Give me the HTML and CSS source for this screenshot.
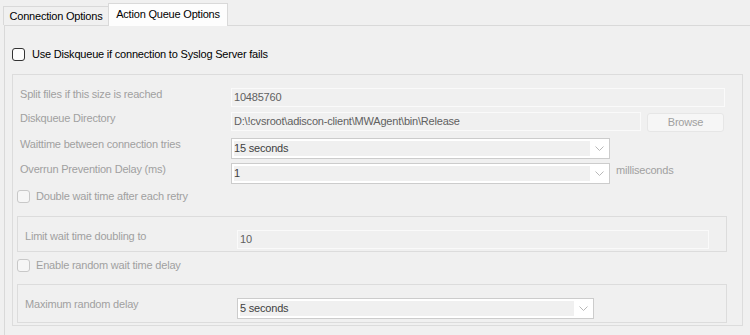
FILE: index.html
```html
<!DOCTYPE html>
<html>
<head>
<meta charset="utf-8">
<link rel="stylesheet" href="styles.css">
</head>
<body>
<div class="tabs">
  <div class="tab">Connection Options</div>
  <div class="tab active">Action Queue Options</div>
</div>
<div class="page">
  <div class="check enabled top"><span class="box"></span><span>Use Diskqueue if connection to Syslog Server fails</span></div>
  <div class="group">
    <div class="row r1">
      <span class="lbl">Split files if this size is reached</span>
      <div class="tb w-size">10485760</div>
    </div>
    <div class="row r2">
      <span class="lbl">Diskqueue Directory</span>
      <div class="tb w-dir">D:\!cvsroot\adiscon-client\MWAgent\bin\Release</div>
      <div class="btn">Browse</div>
    </div>
    <div class="row r3">
      <span class="lbl">Waittime between connection tries</span>
      <div class="combo w-combo"><div class="field">15 seconds</div><div class="arrow"><svg width="9" height="5" viewBox="0 0 9 5"><path d="M0.5 0.5 L4.5 4.5 L8.5 0.5" fill="none" stroke="#b8b8b8" stroke-width="1"/></svg></div></div>
    </div>
    <div class="row r4">
      <span class="lbl">Overrun Prevention Delay (ms)</span>
      <div class="combo w-combo"><div class="field">1</div><div class="arrow"><svg width="9" height="5" viewBox="0 0 9 5"><path d="M0.5 0.5 L4.5 4.5 L8.5 0.5" fill="none" stroke="#b8b8b8" stroke-width="1"/></svg></div></div>
      <span class="unit">milliseconds</span>
    </div>
    <div class="check disabled c1"><span class="box"></span><span>Double wait time after each retry</span></div>
    <div class="sub s1">
      <div class="row">
        <span class="lbl sublbl">Limit wait time doubling to</span>
        <div class="tb w-limit">10</div>
      </div>
    </div>
    <div class="check disabled c2"><span class="box"></span><span>Enable random wait time delay</span></div>
    <div class="sub s2">
      <div class="row">
        <span class="lbl sublbl">Maximum random delay</span>
        <div class="combo w-rand"><div class="field">5 seconds</div><div class="arrow"><svg width="9" height="5" viewBox="0 0 9 5"><path d="M0.5 0.5 L4.5 4.5 L8.5 0.5" fill="none" stroke="#b8b8b8" stroke-width="1"/></svg></div></div>
      </div>
    </div>
  </div>
</div>
</body>
</html>
```
FILE: styles.css
```css
html, body {
  margin: 0;
  padding: 0;
}
body {
  width: 750px;
  height: 335px;
  overflow: hidden;
  background: #f0f0f0;
  font-family: "Liberation Sans", Arial, sans-serif;
  font-size: 11px;
  line-height: 13px;
  letter-spacing: -0.2px;
  color: #000;
}
.tabs {
  display: flex;
  align-items: flex-end;
  height: 25px;
  padding-left: 3px;
}
.tab {
  box-sizing: border-box;
  height: 19px;
  width: 106px;
  border: 1px solid #d9d9d9;
  border-bottom: none;
  background: #f0f0f0;
  text-align: center;
  line-height: 18px;
  color: #000;
}
.tab.active {
  position: relative;
  z-index: 1;
  width: 120px;
  height: 23px;
  margin-bottom: -1px;
  margin-left: -1px;
  background: #fdfdfd;
  line-height: 20px;
}
.page {
  box-sizing: border-box;
  margin-left: 4px;
  width: 760px;
  height: 320px;
  border-top: 1px solid #d9d9d9;
  border-left: 1px solid #d9d9d9;
  padding: 22px 0 0 7px;
}
.check {
  display: flex;
  align-items: center;
  height: 13px;
}
.check .box {
  box-sizing: border-box;
  width: 13px;
  height: 13px;
  border-radius: 3px;
  margin-right: 7px;
  flex: none;
}
.check.enabled .box {
  border: 1px solid #333333;
  background: #fdfdfd;
}
.check.disabled .box {
  border: 1px solid #c8c8c8;
  background: #f6f6f6;
  margin-right: 6px;
}
.check.disabled {
  color: #a0a0a0;
}
.group {
  box-sizing: border-box;
  margin-top: 13px;
  width: 731px;
  height: 252px;
  border: 1px solid #dcdcdc;
  padding: 13px 0 0 7px;
}
.row {
  display: flex;
  align-items: flex-start;
}
.lbl {
  width: 211px;
  flex: none;
  color: #a0a0a0;
}
.sublbl {
  width: 212px;
}
.r2 { margin-top: 5px; }
.r3 { margin-top: 6px; }
.r4 { margin-top: 4px; }
.tb {
  box-sizing: border-box;
  height: 19px;
  border: 1px solid #fafafa;
  padding: 0 2px;
  line-height: 17px;
  color: #606060;
  white-space: nowrap;
  overflow: hidden;
}
.w-size { width: 494px; }
.w-dir { width: 410px; }
.w-limit { width: 472px; }
.btn {
  box-sizing: border-box;
  width: 77px;
  height: 19px;
  margin: 1px 0 0 6px;
  border: 1px solid #e6e6e6;
  border-radius: 3px;
  background: #f6f6f6;
  color: #a0a0a0;
  text-align: center;
  line-height: 17px;
}
.combo {
  box-sizing: border-box;
  display: flex;
  height: 21px;
  border: 1px solid #cccccc;
  background: #ffffff;
  padding: 2px 0 2px 2px;
}
.w-combo { width: 379px; }
.w-rand { width: 357px; }
.combo .field {
  flex: 1;
  background: #f0f0f0;
  color: #404040;
  line-height: 15px;
  white-space: nowrap;
}
.combo .arrow {
  width: 19px;
  flex: none;
  display: flex;
  align-items: center;
  justify-content: center;
}
.unit {
  margin-left: 6px;
  color: #a0a0a0;
  margin-top: 1px;
}
.c1 {
  margin: 6px 0 0 -3px;
}
.sub {
  box-sizing: border-box;
  width: 710px;
  margin-left: -3px;
  border: 1px solid #dcdcdc;
  padding: 13px 0 0 7px;
}
.s1 {
  margin-top: 13px;
  height: 36px;
}
.c2 {
  margin: 7px 0 0 -3px;
}
.s2 {
  margin-top: 12px;
  height: 39px;
}
```
